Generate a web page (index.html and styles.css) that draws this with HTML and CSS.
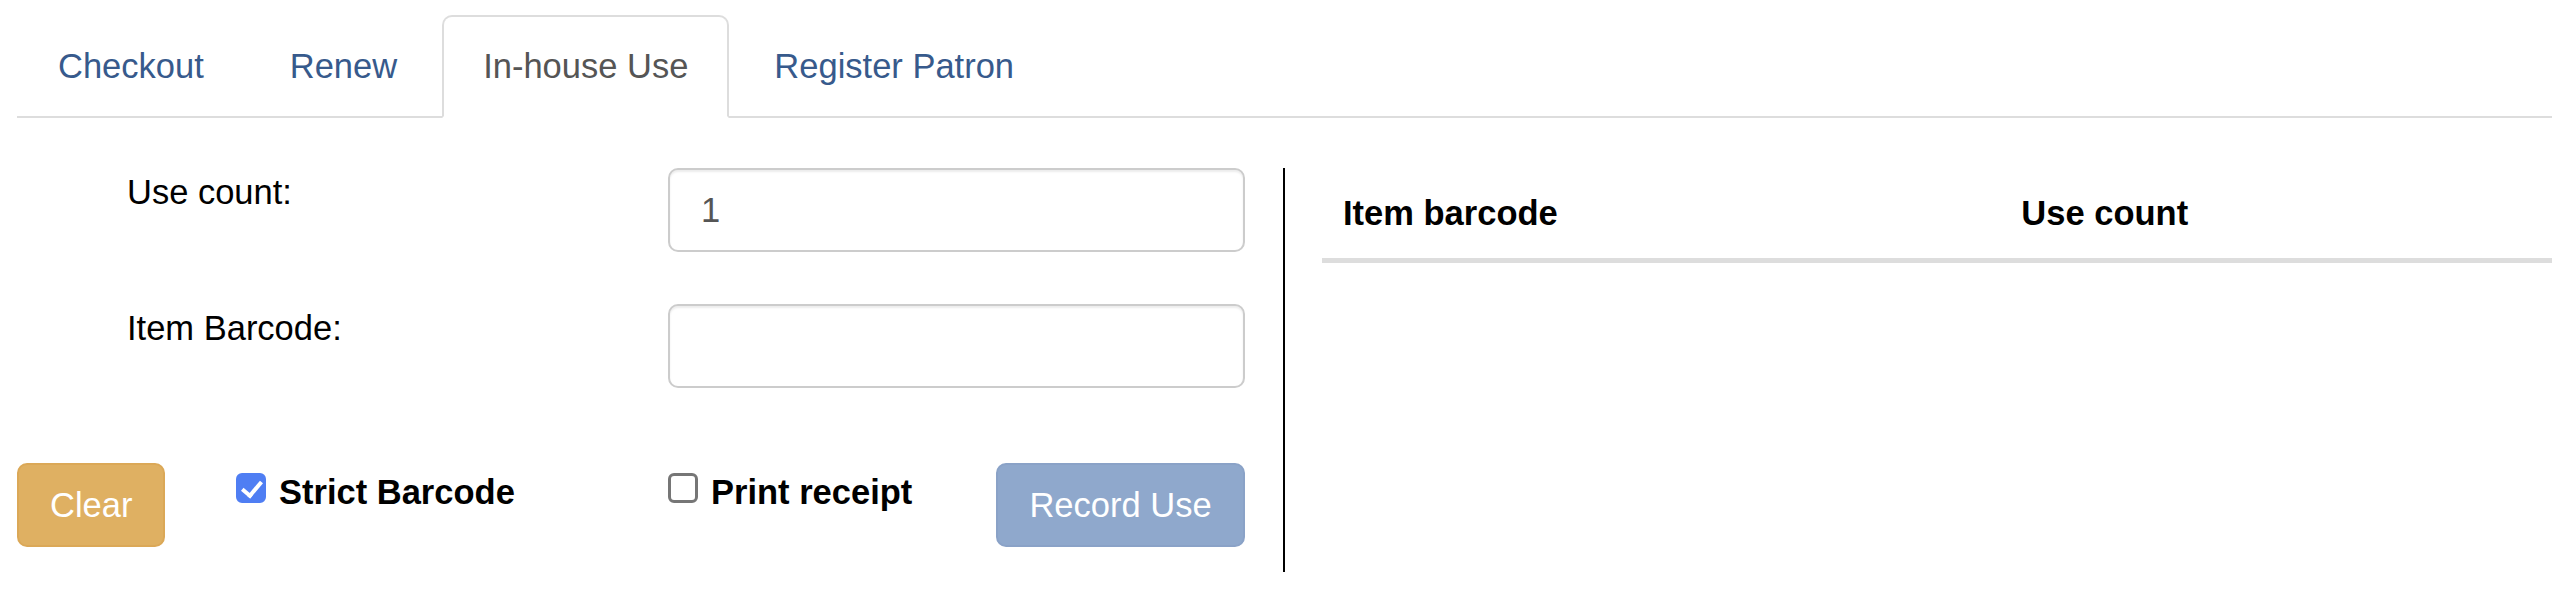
FILE: index.html
```html
<!DOCTYPE html>
<html>
	<head>
		<meta charset="utf-8" />
		<title>In-house Use</title>
		<link rel="stylesheet" href="styles.css">
	</head>
	<body>
		<div id="circ_wrap">
			<ul class="tabs">
				<li><a href="#">Checkout</a></li>
				<li><a href="#">Renew</a></li>
				<li class="active"><a href="#">In-house Use</a></li>
				<li><a href="#">Register Patron</a></li>
			</ul>
			<div class="tab_body">
				<div class="use_form">
					<div class="field">
						<label for="use_count">Use count:</label>
						<input type="text" id="use_count" value="1" />
					</div>
					<div class="field">
						<label for="item_barcode">Item Barcode:</label>
						<input type="text" id="item_barcode" />
					</div>
					<div class="actions">
						<button class="btn btn_clear">Clear</button>
						<label class="check"><input type="checkbox" checked /> Strict Barcode</label>
						<label class="check"><input type="checkbox" /> Print receipt</label>
						<button class="btn btn_record" disabled>Record Use</button>
					</div>
				</div>
				<div class="use_list">
					<table>
						<thead>
							<tr>
								<th>Item barcode</th>
								<th>Use count</th>
							</tr>
						</thead>
						<tbody></tbody>
					</table>
				</div>
			</div>
		</div>
	</body>
</html>
```

FILE: styles.css
```css
*{
	margin:0;
	padding:0;
	list-style: none;
	box-sizing: border-box;
}
body{
	font-family: "Liberation Sans", Arial, sans-serif;
	font-size: 34.5px;
	line-height: 49px;
	color: #000;
	background: #fff;
}
#circ_wrap{
	padding: 15px 17px 0;
}
/* tabs */
.tabs{
	display: flex;
	border-bottom: 2px solid #ddd;
}
	.tabs>li{
		margin-right: 4px;
		margin-bottom: -2px;
	}
	.tabs>li>a{
		display: block;
		padding: 25px 39px;
		border: 2px solid transparent;
		border-radius: 10px 10px 0 0;
		color: #375a8c;
		text-decoration: none;
	}
	.tabs>li.active>a{
		color: #555;
		background: #fff;
		border-color: #ddd;
		border-bottom-color: transparent;
	}
.tab_body{
	display: flex;
	align-items: flex-start;
	margin-top: 50px;
}
/* left: form */
.use_form{
	width: 1268px;
	padding: 0 38px 25px 0;
	border-right: 2px solid #000;
}
	.field{
		display: flex;
		margin-bottom: 52px;
	}
	.field label{
		width: 651px;
		padding-left: 110px;
	}
	.field input{
		flex: 1;
		height: 84px;
		padding: 0 31px;
		border: 2px solid #ccc;
		border-radius: 10px;
		box-shadow: inset 0 2px 2px rgba(0,0,0,.075);
		font-family: inherit;
		font-size: 34.5px;
		color: #555;
		outline: none;
	}
	.actions{
		display: grid;
		grid-template-columns: 219px 432px 328px 249px;
		align-items: start;
		margin-top: 75px;
	}
.btn{
	height: 84px;
	padding: 0 31px;
	border: 2px solid transparent;
	border-radius: 10px;
	font-family: inherit;
	font-size: 34.5px;
	line-height: 49px;
	color: #fff;
	justify-self: start;
}
	.btn_clear{
		background: #dfb062;
		border-color: #dba857;
	}
	.btn_record{
		justify-self: stretch;
		background: #8fa8cc;
		border-color: #8aa2c7;
	}
.check{
	display: flex;
	align-items: flex-start;
	margin-top: 5px;
	font-weight: bold;
}
	.check input{
		appearance: none;
		-webkit-appearance: none;
		position: relative;
		flex: none;
		width: 30px;
		height: 30px;
		margin: 5px 13px 0 0;
		border: 3px solid #767676;
		border-radius: 6px;
		background: #fff;
	}
	.check input:checked{
		background: #4f7ef3;
		border-color: #4f7ef3;
	}
	.check input:checked::after{
		content: "";
		position: absolute;
		left: 7px;
		top: 1px;
		width: 8px;
		height: 16px;
		border: solid #fff;
		border-width: 0 4px 4px 0;
		transform: rotate(40deg);
	}
/* right: list */
.use_list{
	flex: 1;
	padding-left: 37px;
}
	.use_list table{
		width: 100%;
		border-collapse: collapse;
	}
	.use_list th{
		padding: 21px 21px 20px;
		border-bottom: 5px solid #ddd;
		text-align: left;
		font-weight: bold;
	}
```
